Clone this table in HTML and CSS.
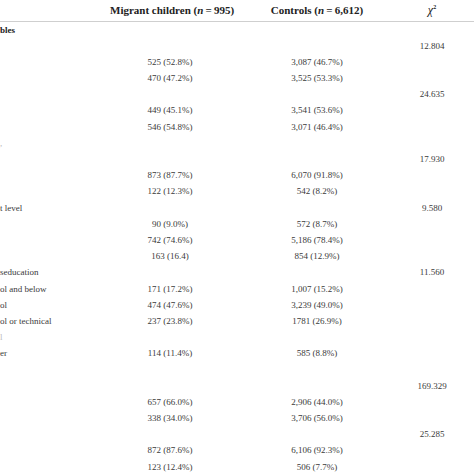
FILE: index.html
```html
<!DOCTYPE html>
<html>
<head>
<meta charset="utf-8">
<link rel="stylesheet" href="styles.css">
</head>
<body>
<div class="table">
  <div class="row head">
    <div class="c lab"></div>
    <div class="c">Migrant children (<i>n</i>&thinsp;=&thinsp;995)</div>
    <div class="c">Controls (<i>n</i>&thinsp;=&thinsp;6,612)</div>
    <div class="c chi"><i>χ</i><sup>2</sup></div>
  </div>
  <div class="row"><div class="c lab bold">bles</div><div class="c"></div><div class="c"></div><div class="c"></div></div>
  <div class="row"><div class="c lab"></div><div class="c"></div><div class="c"></div><div class="c">12.804</div></div>
  <div class="row"><div class="c lab"></div><div class="c">525 (52.8%)</div><div class="c">3,087 (46.7%)</div><div class="c"></div></div>
  <div class="row"><div class="c lab"></div><div class="c">470 (47.2%)</div><div class="c">3,525 (53.3%)</div><div class="c"></div></div>
  <div class="row"><div class="c lab"></div><div class="c"></div><div class="c"></div><div class="c">24.635</div></div>
  <div class="row"><div class="c lab"></div><div class="c">449 (45.1%)</div><div class="c">3,541 (53.6%)</div><div class="c"></div></div>
  <div class="row"><div class="c lab"></div><div class="c">546 (54.8%)</div><div class="c">3,071 (46.4%)</div><div class="c"></div></div>
  <div class="row"><div class="c lab faint">,</div><div class="c"></div><div class="c"></div><div class="c"></div></div>
  <div class="row"><div class="c lab"></div><div class="c"></div><div class="c"></div><div class="c">17.930</div></div>
  <div class="row"><div class="c lab"></div><div class="c">873 (87.7%)</div><div class="c">6,070 (91.8%)</div><div class="c"></div></div>
  <div class="row"><div class="c lab"></div><div class="c">122 (12.3%)</div><div class="c">542 (8.2%)</div><div class="c"></div></div>
  <div class="row"><div class="c lab">t level</div><div class="c"></div><div class="c"></div><div class="c">9.580</div></div>
  <div class="row"><div class="c lab"></div><div class="c">90 (9.0%)</div><div class="c">572 (8.7%)</div><div class="c"></div></div>
  <div class="row"><div class="c lab"></div><div class="c">742 (74.6%)</div><div class="c">5,186 (78.4%)</div><div class="c"></div></div>
  <div class="row"><div class="c lab"></div><div class="c">163 (16.4)</div><div class="c">854 (12.9%)</div><div class="c"></div></div>
  <div class="row"><div class="c lab">seducation</div><div class="c"></div><div class="c"></div><div class="c">11.560</div></div>
  <div class="row"><div class="c lab">ol and below</div><div class="c">171 (17.2%)</div><div class="c">1,007 (15.2%)</div><div class="c"></div></div>
  <div class="row"><div class="c lab">ol</div><div class="c">474 (47.6%)</div><div class="c">3,239 (49.0%)</div><div class="c"></div></div>
  <div class="row"><div class="c lab">ol or technical</div><div class="c">237 (23.8%)</div><div class="c">1781 (26.9%)</div><div class="c"></div></div>
  <div class="row"><div class="c lab faint">l</div><div class="c"></div><div class="c"></div><div class="c"></div></div>
  <div class="row"><div class="c lab">er</div><div class="c">114 (11.4%)</div><div class="c">585 (8.8%)</div><div class="c"></div></div>
  <div class="row"><div class="c lab"></div><div class="c"></div><div class="c"></div><div class="c"></div></div>
  <div class="row"><div class="c lab"></div><div class="c"></div><div class="c"></div><div class="c">169.329</div></div>
  <div class="row"><div class="c lab"></div><div class="c">657 (66.0%)</div><div class="c">2,906 (44.0%)</div><div class="c"></div></div>
  <div class="row"><div class="c lab"></div><div class="c">338 (34.0%)</div><div class="c">3,706 (56.0%)</div><div class="c"></div></div>
  <div class="row"><div class="c lab"></div><div class="c"></div><div class="c"></div><div class="c">25.285</div></div>
  <div class="row"><div class="c lab"></div><div class="c">872 (87.6%)</div><div class="c">6,106 (92.3%)</div><div class="c"></div></div>
  <div class="row"><div class="c lab"></div><div class="c">123 (12.4%)</div><div class="c">506 (7.7%)</div><div class="c"></div></div>
</div>
</body>
</html>
```
FILE: styles.css
```css
html, body {
  margin: 0;
  padding: 0;
  background: #ffffff;
}
body {
  width: 474px;
  height: 474px;
  overflow: hidden;
  font-family: "Liberation Serif", "Times New Roman", serif;
  color: #3a3a3a;
}
.table {
  display: flex;
  flex-direction: column;
}
.row {
  display: grid;
  grid-template-columns: 110px 120px 174px 56px;
  height: 16.2px;
  align-items: center;
  font-size: 9px;
  line-height: 16.2px;
}
.row.head {
  height: 20.5px;
  line-height: 20.5px;
  border-bottom: 1.2px solid #cfcfcf;
  font-size: 11px;
  font-weight: bold;
  color: #222222;
}
.c {
  text-align: center;
  white-space: nowrap;
}
.c.lab {
  text-align: left;
}
.bold {
  font-weight: bold;
  color: #222222;
}
.faint {
  color: #bbbbbb;
}
.chi i {
  font-weight: normal;
  font-size: 12px;
}
.chi sup {
  font-size: 6px;
  vertical-align: 5px;
  line-height: 0;
}
```
